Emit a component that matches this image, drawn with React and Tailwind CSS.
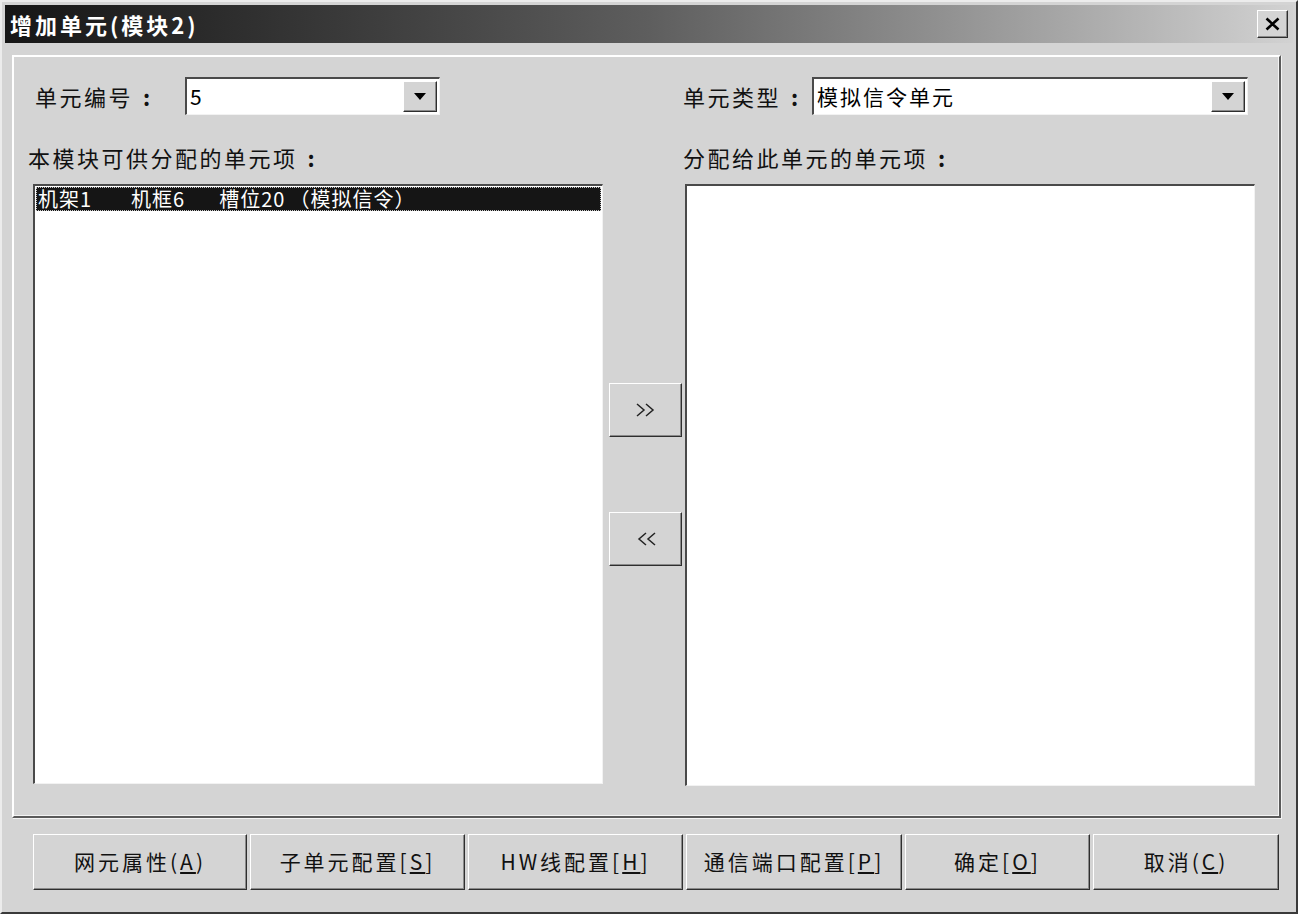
import React from 'react';

const font = "font-['Noto_Sans_CJK_SC','Liberation_Sans',sans-serif]";
const sunken = 'border-t-2 border-l-2 border-r border-b border-t-[#4a4a4a] border-l-[#4a4a4a] border-r-[#f2f2f2] border-b-[#f2f2f2] bg-white';
const raised = 'border border-t-white border-l-white border-r-[#2e2e2e] border-b-[#2e2e2e] shadow-[inset_-1px_-1px_0_#8a8a8a] bg-[#d4d4d4]';

const DownArrow = () => (
  <svg width="12" height="7" viewBox="0 0 12 7">
    <path d="M0 0h12L6 7z" fill="#000" />
  </svg>
);

const Combo = ({ value, width }) => (
  <div className={`${sunken} h-[38px] flex items-stretch shrink-0`} style={{ width }}>
    <div className="flex-1 pl-[3px] flex items-center text-[21px] tracking-[2px] text-black">{value}</div>
    <div className={`${raised} w-[34px] my-[2px] mr-[2px] flex items-center justify-center`}>
      <DownArrow />
    </div>
  </div>
);

const Label = ({ text, className }) => (
  <span className={`${className} shrink-0 whitespace-nowrap`}>
    {text}
    <span className="ml-[10px] font-bold">:</span>
  </span>
);

const Btn = ({ children, w }) => (
  <button className={`${raised} h-[56px] flex items-center justify-center text-[21px] tracking-[3px] text-[#111]`} style={{ width: w }}>
    {children}
  </button>
);

const App = () => {
  return (
    <div className={`${font} w-[1298px] h-[914px] bg-[#d4d4d4] border-2 border-t-[#ececec] border-l-[#ececec] border-r-[#3a3a3a] border-b-[#3a3a3a] p-[3px] flex flex-col overflow-hidden`}>
      {/* title bar */}
      <div className="h-[38px] shrink-0 bg-gradient-to-r from-[#161616] via-[#5e5e5e] to-[#d2d2d2] flex items-center justify-between pl-[5px] pr-[5px]">
        <span className="text-white font-bold text-[22px] tracking-[3px]">增加单元(模块2)</span>
        <div className={`${raised} w-[31px] h-[28px] flex items-center justify-center`}>
          <svg width="15" height="14" viewBox="0 0 15 14">
            <path d="M1.5 1.5l12 11M13.5 1.5l-12 11" stroke="#000" strokeWidth="2.6" />
          </svg>
        </div>
      </div>

      {/* group panel */}
      <div className="ml-[7px] mt-[12px] w-[1269px] h-[763px] shrink-0 border-2 border-t-white border-l-white border-r-[#5a5a5a] border-b-[#5a5a5a] shadow-[inset_-1px_-1px_0_#f4f4f4,1px_1px_0_#f4f4f4] flex flex-col">
        <div className="mt-[20px] flex items-center h-[38px] text-[22px] tracking-[2.5px] text-[#111]">
          <Label text="单元编号" className="ml-[21px] w-[150px]" />
          <Combo value="5" width={255} />
          <Label text="单元类型" className="ml-[243px] w-[129px]" />
          <Combo value="模拟信令单元" width={436} />
        </div>

        <div className="mt-[28px] h-[28px] flex items-center text-[22px] tracking-[2.5px] text-[#111]">
          <Label text="本模块可供分配的单元项" className="ml-[14px] w-[655px]" />
          <Label text="分配给此单元的单元项" />
        </div>

        <div className="mt-[13px] flex">
          <div className={`${sunken} ml-[19px] w-[570px] h-[600px] p-px`}>
            <div className="h-[24px] bg-[#151515] border border-dotted border-[#c8c8c8] flex items-center pl-[1px] text-white text-[20px] tracking-[1px] whitespace-pre leading-none">
              <span>机架1</span>
              <span className="ml-[39px]">机框6</span>
              <span className="ml-[34px]">槽位20</span>
              <span className="ml-[4px]">（模拟信令）</span>
            </div>
          </div>
          <div className="w-[82px] flex flex-col">
            <button className={`${raised} ml-[6px] mt-[199px] w-[73px] h-[54px] flex items-center justify-center`}>
              <svg width="22" height="14" viewBox="0 0 22 14">
                <path d="M2 1l7 6-7 6M11 1l7 6-7 6" stroke="#222" strokeWidth="1.5" fill="none" />
              </svg>
            </button>
            <button className={`${raised} ml-[6px] mt-[75px] w-[73px] h-[54px] flex items-center justify-center`}>
              <svg width="22" height="14" viewBox="0 0 22 14">
                <path d="M11 1L4 7l7 6M20 1l-7 6 7 6" stroke="#222" strokeWidth="1.5" fill="none" />
              </svg>
            </button>
          </div>
          <div className={`${sunken} w-[570px] h-[602px]`} />
        </div>
      </div>

      {/* bottom buttons */}
      <div className="mt-[16px] ml-[28px] flex gap-[3px]">
        <Btn w={214}>网元属性(<span className="underline">A</span>)</Btn>
        <Btn w={215}>子单元配置[<span className="underline">S</span>]</Btn>
        <Btn w={215}>HW线配置[<span className="underline">H</span>]</Btn>
        <Btn w={216}>通信端口配置[<span className="underline">P</span>]</Btn>
        <Btn w={185}>确定[<span className="underline">O</span>]</Btn>
        <Btn w={186}>取消(<span className="underline">C</span>)</Btn>
      </div>
    </div>
  );
};

export default App;
